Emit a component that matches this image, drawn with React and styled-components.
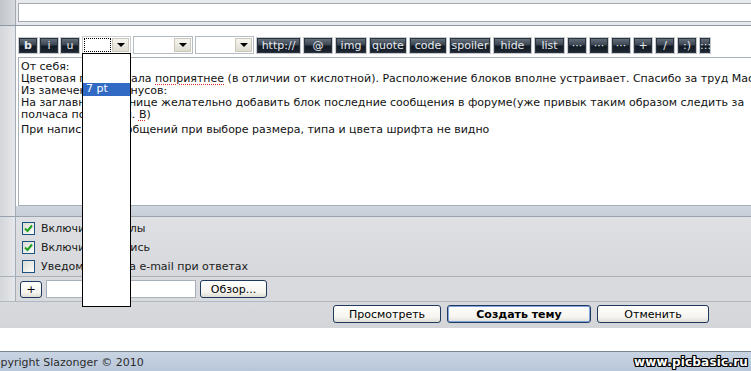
import React from "react";
import styled, { createGlobalStyle } from "styled-components";

const Global = createGlobalStyle`
  html, body { margin: 0; padding: 0; background: #fff; overflow: hidden; }
  * { box-sizing: border-box; }
`;

const Page = styled.div`
  width: 751px;
  height: 371px;
  overflow: hidden;
  font-family: "DejaVu Sans", Verdana, sans-serif;
  font-size: 11px;
  color: #111;
  display: flex;
  flex-direction: column;
`;

const Row = styled.div`
  display: flex;
  flex: none;
  height: ${(p) => p.$h}px;
  border-bottom: ${(p) => (p.$line ? `1px solid ${p.$line}` : "none")};
`;

const LeftCell = styled.div`
  width: 16px;
  flex: none;
  border-right: 1px solid #a3abb5;
  background: ${(p) =>
    p.$dark
      ? "linear-gradient(to right, #c2c6cc, #d6d9de)"
      : "linear-gradient(to right, #d3d6da, #e6e7ea)"};
`;

const Cell = styled.div`
  flex: 1;
  min-width: 0;
  display: flex;
  flex-direction: ${(p) => (p.$col ? "column" : "row")};
  align-items: ${(p) => (p.$col ? "stretch" : "center")};
  gap: ${(p) => p.$gap || 0}px;
  padding: ${(p) => p.$pad || "0"};
  background: ${(p) => p.$bg || "transparent"};
`;

const SubjectInput = styled.div`
  height: 19px;
  flex: 1;
  margin-right: -4px;
  background: #fff;
  border: 1px solid #a1a9b2;
`;

const Toolbar = styled.div`
  display: flex;
  align-items: center;
  height: 18px;
  gap: 2px;
`;

const ToolButton = styled.div`
  width: ${(p) => p.$w}px;
  height: 17px;
  flex: none;
  margin-right: ${(p) => p.$mr ?? 0}px;
  border: 1px solid #c3c9cf;
  box-shadow: inset 0 0 0 1px #2b333c;
  background: linear-gradient(#6b7581 0%, #3c4652 45%, #121a24 55%, #1e2834 100%);
  color: #e6eaee;
  font-weight: ${(p) => (p.$bold ? "bold" : "normal")};
  font-size: 11px;
  line-height: 15px;
  text-align: center;
  white-space: nowrap;
  overflow: hidden;
`;

const SelectWrap = styled.div`
  position: relative;
  width: ${(p) => p.$w}px;
  height: 18px;
  flex: none;
  display: flex;
  border: 1px solid ${(p) => (p.$focus ? "#c8ccd0" : "#b4bcc4")};
  background: #fff;
`;

const SelectValue = styled.div`
  flex: 1;
  margin: 1px;
  border: 1px dotted ${(p) => (p.$focus ? "#000" : "transparent")};
`;

const SelectArrow = styled.div`
  width: 17px;
  flex: none;
  margin: 1px 1px 1px 0;
  background: linear-gradient(#f6f5f0, #dedbd0);
  border: 1px solid #cbc7ba;
  display: flex;
  align-items: center;
  justify-content: center;
  &::after {
    content: "";
    border-left: 4px solid transparent;
    border-right: 4px solid transparent;
    border-top: 4px solid #000;
  }
`;

const DropList = styled.div`
  position: absolute;
  left: -1px;
  top: 16px;
  width: 49px;
  height: 254px;
  background: #fff;
  border: 1px solid #000;
  z-index: 10;
  padding-top: 29px;
`;

const DropItem = styled.div`
  height: 13px;
  line-height: 12px;
  padding-left: 3px;
  font-size: 11px;
  color: ${(p) => (p.$active ? "#fff" : "#000")};
  background: ${(p) => (p.$active ? "#316ac5" : "transparent")};
`;

const TextArea = styled.div`
  height: 149px;
  margin-right: -20px;
  border: 1px solid #a7afb8;
  background: #fff;
  padding: 3px 2px;
  font-size: 11px;
  line-height: 12px;
  white-space: pre;
  overflow: hidden;
  color: #111;
`;

const Line = styled.div`
  height: ${(p) => p.$h || 12}px;
`;

const Spell = styled.span`
  text-decoration: underline dotted #e03030;
  text-underline-offset: 2px;
`;

const OptionList = styled.div`
  display: flex;
  flex-direction: column;
`;

const OptionRow = styled.label`
  display: flex;
  align-items: center;
  height: 19px;
  gap: 6px;
  color: #1a1a1a;
`;

const CheckBox = styled.span`
  width: 13px;
  height: 13px;
  flex: none;
  border: 1px solid #1c5180;
  background: linear-gradient(135deg, #dcdcd6, #fbfbf9);
  display: flex;
  align-items: center;
  justify-content: center;
`;

const XPButton = styled.div`
  height: ${(p) => p.$h || 18}px;
  width: ${(p) => p.$w}px;
  flex: none;
  border: 1px solid #1f3a5c;
  border-radius: 3px;
  background: linear-gradient(#ffffff 0%, #f5f4ef 70%, #dedcd3 100%);
  box-shadow: ${(p) => (p.$default ? "inset 0 0 0 1px #7fa2e0" : "none")};
  font-size: 11px;
  font-weight: ${(p) => (p.$default ? "bold" : "normal")};
  color: #000;
  display: flex;
  align-items: center;
  justify-content: center;
  white-space: nowrap;
`;

const FileInput = styled.div`
  width: 150px;
  height: 18px;
  flex: none;
  background: #fff;
  border: 1px solid #a7b0b9;
`;

const ButtonRow = styled.div`
  display: flex;
  justify-content: flex-end;
  align-items: flex-start;
  gap: 6px;
  height: 26px;
  flex: none;
  padding: 3px 42px 0 0;
  background: linear-gradient(#d7d9dc, #d3d5d8);
`;

const WhiteGap = styled.div`
  height: 23px;
  flex: none;
  background: #fff;
`;

const Footer = styled.div`
  height: 21px;
  flex: none;
  border-top: 1px solid #7e868f;
  background: linear-gradient(#c9d4e2, #b7c6d9);
  display: flex;
  align-items: center;
  justify-content: space-between;
  padding-right: 3px;
`;

const Copyright = styled.span`
  margin-left: -14px;
  color: #2c2c2c;
  font-size: 11px;
`;

const Watermark = styled.span`
  font-family: "DejaVu Sans", sans-serif;
  font-weight: bold;
  font-size: 12px;
  color: #fff;
  letter-spacing: 0.2px;
  text-shadow: 1px 0 #000, -1px 0 #000, 0 1px #000, 0 -1px #000, 1px 1px #000,
    -1px -1px #000, 1px -1px #000, -1px 1px #000;
`;

const Check = () => (
  <svg width="9" height="9" viewBox="0 0 9 9">
    <polyline points="1,4.5 3.5,7 8,1.5" fill="none" stroke="#21a121" strokeWidth="2" />
  </svg>
);

const tools = [
  ["http://", 45],
  ["@", 30],
  ["img", 32],
  ["quote", 38],
  ["code", 38],
  ["spoiler", 42],
  ["hide", 39],
  ["list", 31],
  ["···", 20],
  ["···", 20],
  ["···", 20],
  ["+", 20],
  ["/", 20],
  [":)", 20],
  ["::::", 12],
];

export default function App() {
  return (
    <Page>
      <Global />
      <Row $h={26} $line="#8d97a2">
        <LeftCell $dark />
        <Cell $pad="0 0 0 2px" $bg="#e7e9ec">
          <SubjectInput />
        </Cell>
      </Row>

      <Row $h={180}>
        <LeftCell />
        <Cell $col $pad="10px 0 0 2px" $gap={3} $bg="#fff">
          <Toolbar>
            <ToolButton $w={20} $mr={-1} $bold>b</ToolButton>
            <ToolButton $w={20} $mr={-1}>i</ToolButton>
            <ToolButton $w={20}>u</ToolButton>
            <SelectWrap $w={49} $focus>
              <SelectValue $focus />
              <SelectArrow />
              <DropList>
                <DropItem $active>7 pt</DropItem>
              </DropList>
            </SelectWrap>
            <SelectWrap $w={60}>
              <SelectValue />
              <SelectArrow />
            </SelectWrap>
            <SelectWrap $w={59}>
              <SelectValue />
              <SelectArrow />
            </SelectWrap>
            {tools.map(([t, w], i) => (
              <ToolButton key={i} $w={w}>{t}</ToolButton>
            ))}
          </Toolbar>
          <TextArea>
            <Line>От себя:</Line>
            <Line>
              Цветовая гамма стала <Spell>поприятнее</Spell> (в отличии от кислотной). Расположение блоков вполне устраивает. Спасибо за труд Мастеру.
            </Line>
            <Line>Из замечений и минусов:</Line>
            <Line>
              На заглавной странице желательно добавить блок последние сообщения в форуме(уже привык таким образом следить за
            </Line>
            <Line $h={15}>
              полчаса потерялся. <Spell>В</Spell>)
            </Line>
            <Line>При написании сообщений при выборе размера, типа и цвета шрифта не видно</Line>
          </TextArea>
        </Cell>
      </Row>

      <Row $h={11} $line="#9aa3ad">
        <LeftCell />
        <Cell $bg="linear-gradient(#d0d6dd, #c6ced8)" />
      </Row>

      <Row $h={60} $line="#a9b0b8">
        <LeftCell />
        <Cell $pad="1px 0 0 6px" $bg="linear-gradient(#dfe0e3, #d6d8db)">
          <OptionList>
            <OptionRow>
              <CheckBox><Check /></CheckBox>
              Включить смайлы
            </OptionRow>
            <OptionRow>
              <CheckBox><Check /></CheckBox>
              Включить подпись
            </OptionRow>
            <OptionRow>
              <CheckBox />
              Уведомление на e-mail при ответах
            </OptionRow>
          </OptionList>
        </Cell>
      </Row>

      <Row $h={25} $line="#b3b9c0">
        <LeftCell />
        <Cell $pad="0 0 0 4px" $gap={4} $bg="#d8dadd">
          <XPButton $w={22} $h={17}>+</XPButton>
          <FileInput />
          <XPButton $w={67}>Обзор...</XPButton>
        </Cell>
      </Row>

      <ButtonRow>
        <XPButton $w={108}>Просмотреть</XPButton>
        <XPButton $w={144} $default>Создать тему</XPButton>
        <XPButton $w={112}>Отменить</XPButton>
      </ButtonRow>

      <WhiteGap />

      <Footer>
        <Copyright>Copyright Slazonger © 2010</Copyright>
        <Watermark>www.picbasic.ru</Watermark>
      </Footer>
    </Page>
  );
}
